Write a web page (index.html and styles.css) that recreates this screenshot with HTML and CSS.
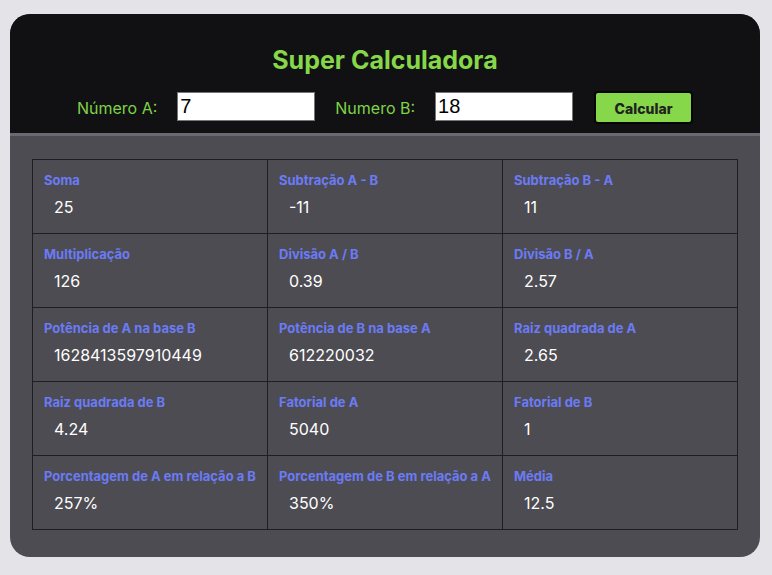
FILE: index.html
```html
<!DOCTYPE html>
<html lang="pt-BR">
<head>
<meta charset="utf-8">
<title>Super Calculadora</title>
<link rel="stylesheet" href="styles.css">
</head>
<body>
<div class="app">
  <header class="top">
    <h1 class="title">Super Calculadora</h1>
    <div class="controls">
      <label class="lbl" for="a">Número A:</label>
      <input class="num" id="a" type="text" value="7">
      <label class="lbl" for="b">Numero B:</label>
      <input class="num" id="b" type="text" value="18">
      <button class="btn">Calcular</button>
    </div>
  </header>
  <main class="body">
    <div class="grid">
      <div class="cell"><div class="name">Soma</div><div class="val">25</div></div>
      <div class="cell"><div class="name">Subtração A - B</div><div class="val">-11</div></div>
      <div class="cell"><div class="name">Subtração B - A</div><div class="val">11</div></div>
      <div class="cell"><div class="name">Multiplicação</div><div class="val">126</div></div>
      <div class="cell"><div class="name">Divisão A / B</div><div class="val">0.39</div></div>
      <div class="cell"><div class="name">Divisão B / A</div><div class="val">2.57</div></div>
      <div class="cell"><div class="name">Potência de A na base B</div><div class="val">1628413597910449</div></div>
      <div class="cell"><div class="name">Potência de B na base A</div><div class="val">612220032</div></div>
      <div class="cell"><div class="name">Raiz quadrada de A</div><div class="val">2.65</div></div>
      <div class="cell"><div class="name">Raiz quadrada de B</div><div class="val">4.24</div></div>
      <div class="cell"><div class="name">Fatorial de A</div><div class="val">5040</div></div>
      <div class="cell"><div class="name">Fatorial de B</div><div class="val">1</div></div>
      <div class="cell"><div class="name">Porcentagem de A em relação a B</div><div class="val">257%</div></div>
      <div class="cell"><div class="name">Porcentagem de B em relação a A</div><div class="val">350%</div></div>
      <div class="cell"><div class="name">Média</div><div class="val">12.5</div></div>
    </div>
  </main>
</div>
</body>
</html>
```
FILE: styles.css
```css
* { box-sizing: border-box; }
html, body { margin: 0; padding: 0; }
body {
  background: #e4e3e8;
  font-family: Inter, "Noto Sans", sans-serif;
  padding: 14px 12px 18px 10px;
}
.app {
  width: 750px;
  height: 543px;
  border-radius: 20px;
  overflow: hidden;
  background: #4d4c52;
  display: flex;
  flex-direction: column;
}
.top {
  background: #111113;
  padding: 30px 0 9px;
  border-bottom: 3px solid #6b6a73;
}
.title {
  margin: 0;
  text-align: center;
  font-size: 25px;
  line-height: 32px;
  font-weight: 700;
  color: #86d84a;
}
.controls {
  margin-top: 15px;
  height: 33px;
  display: flex;
  align-items: flex-start;
  justify-content: center;
  gap: 20px;
}
.lbl {
  color: #7fd347;
  font-size: 16px;
  line-height: 34px;
}
.num {
  width: 138px;
  height: 29px;
  border: 1px solid #767676;
  background: #fff;
  font-family: "Liberation Sans", Arial, sans-serif;
  font-size: 20px;
  color: #000;
  padding: 1px 2px;
  margin-top: 1px;
}
.btn {
  width: 99px;
  height: 33px;
  background: #86d84a;
  border: 2px solid #050505;
  border-radius: 4px;
  font-family: Inter, sans-serif;
  font-weight: 800;
  font-size: 14px;
  color: #222;
  margin-left: 1px;
  padding: 2px 0 0;
}
.body {
  flex: 1;
  padding: 23px 22px 27px 22px;
}
.grid {
  display: grid;
  grid-template-columns: repeat(3, 234px);
  grid-auto-rows: 73px;
  gap: 1px;
  padding: 1px;
  background: #1f1f22;
  width: 706px;
}
.cell {
  background: #4d4c52;
  padding: 13px 11px 0;
}
.name {
  color: #6b7bf6;
  font-weight: 700;
  font-size: 13px;
  line-height: 15px;
  white-space: nowrap;
}
.val {
  color: #fff;
  font-size: 16px;
  line-height: 20px;
  margin-top: 9px;
  padding-left: 10px;
}
```
